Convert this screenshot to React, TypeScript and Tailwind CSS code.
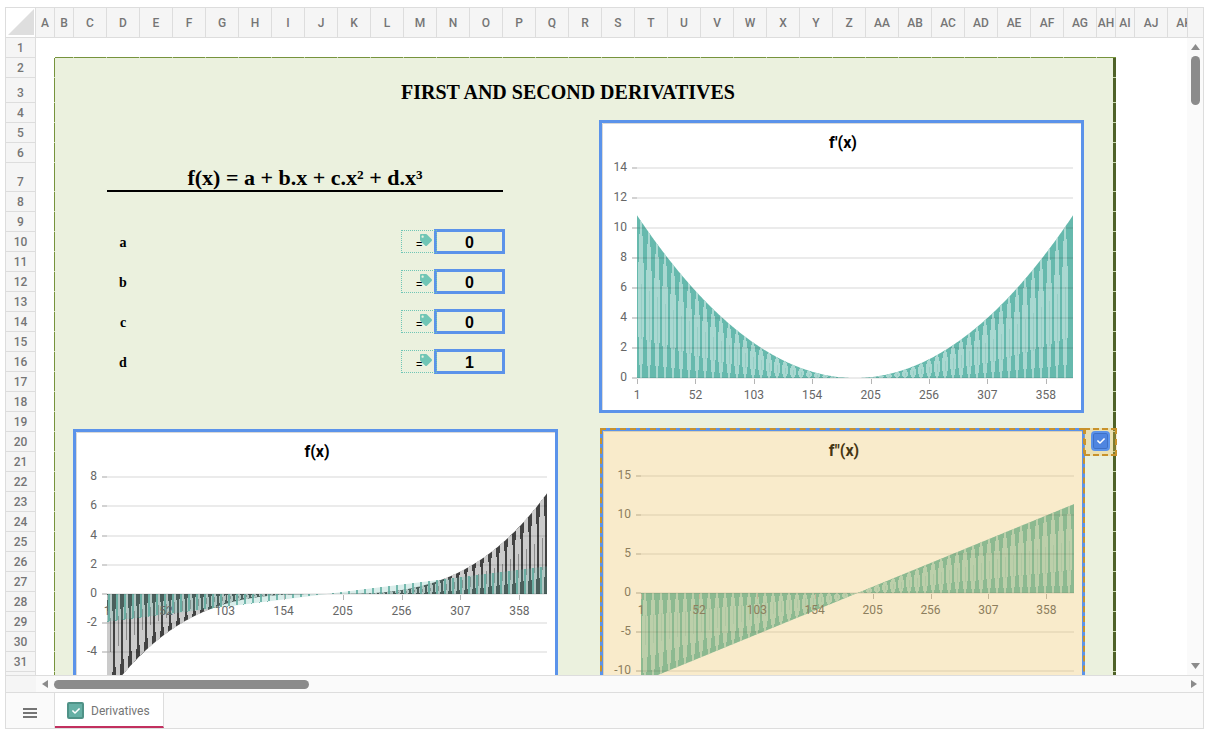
import { useState } from "react";
import { FaCheck, FaTag } from "react-icons/fa";

const letter = (i: number) =>
  i < 26 ? String.fromCharCode(65 + i) : "A" + String.fromCharCode(39 + i);

const columns = Array.from({ length: 37 }, (_, i) => ({
  name: letter(i),
  width: [0, 1, 33, 34].includes(i) ? "w-[19px]" : "w-[33px]",
}));

const rows = Array.from({ length: 35 }, (_, i) => ({
  name: i + 1,
  height: i === 2 ? "h-[25px]" : i === 6 ? "h-[29px]" : "h-5",
}));

type Series = {
  f: (t: number) => number;
  area: string;
  stripe: string;
  seam?: string;
  narrow: number;
  wide: number;
  phase: number;
};

type ChartProps = {
  title: string;
  left: number;
  zero: number;
  unit: number;
  ticks: number[];
  step: number;
  labelY: number;
  series: Series[];
};

const RIGHT = 471;

const teal: Omit<Series, "f"> = {
  area: "#66b9ad",
  stripe: "#a9d8d1",
  seam: "#96cec5",
  narrow: 2,
  wide: 6,
  phase: 4,
};

const Area = ({ s, left, zero, unit }: { s: Series; left: number; zero: number; unit: number }) => {
  const yAt = (x: number) => zero - s.f(((x - left) / (RIGHT - left)) * 2 - 1) * unit;
  const xs: number[] = [];
  for (let x = left; x <= RIGHT; x++) xs.push(x);
  const outline = `M${left} ${zero}` + xs.map((x) => `L${x} ${yAt(x)}`).join("") + `L${RIGHT} ${zero}Z`;

  // stripes swell in the middle of the area and taper at both ends
  let stripes = "";
  let seams = "";
  for (let x = left + s.phase; x < RIGHT - 1; x += 8) {
    const at = (k: number) => zero + (yAt(x) - zero) * k;
    const n = s.narrow / 2;
    const w = s.wide / 2;
    stripes +=
      `M${x - n} ${yAt(x - n)}L${x + n} ${yAt(x + n)}L${x + w} ${at(0.65)}L${x + w} ${at(0.35)}` +
      `L${x + n} ${zero}H${x - n}L${x - w} ${at(0.35)}L${x - w} ${at(0.65)}Z`;
    seams += `M${x + 0.5} ${at(0.6)}V${at(0.25)}`;
  }

  return (
    <g>
      <path d={outline} fill={s.area} />
      <path d={stripes} fill={s.stripe} shapeRendering="crispEdges" />
      {s.seam && <path d={seams} stroke={s.seam} shapeRendering="crispEdges" />}
    </g>
  );
};

const Chart = ({ title, left, zero, unit, ticks, step, labelY, series }: ChartProps) => (
  <svg viewBox="0 0 479 287" className="block h-[287px] w-[479px] font-[Roboto,sans-serif]" role="img" aria-label={title}>
    <path d="M0.5 287V0.5H479" fill="none" stroke="#d9d9d9" />
    <text x="241" y="25" textAnchor="middle" fontSize="16" fontWeight="700" fill="#000">
      {title}
    </text>
    {series.map((s, i) => (
      <Area key={i} s={s} left={left} zero={zero} unit={unit} />
    ))}
    {ticks.map((t) => {
      const y = Math.round(zero - t * unit);
      return (
        <g key={t}>
          <rect x={left} y={y - 1} width={RIGHT - left} height="2" fill="#000" fillOpacity="0.08" />
          <rect x={left - 5} y={y - 1} width="5" height="2" fill="#d2d2d2" />
          <text x={left - 10} y={y + 3} textAnchor="end" fontSize="12" fill="#666">
            {t}
          </text>
        </g>
      );
    })}
    {[1, 52, 103, 154, 205, 256, 307, 358].map((n, i) => (
      <g key={n}>
        <rect x={Math.round(left + i * step)} y={zero + 1} width="1" height="5" fill="#b5b5b5" />
        <text x={left + i * step} y={labelY} textAnchor="middle" fontSize="12" fill="#666">
          {n}
        </text>
      </g>
    ))}
  </svg>
);

const Coefficient = ({ name, initial }: { name: string; initial: string }) => {
  const [value, setValue] = useState(initial);
  return (
    <div className="flex h-10 items-start pt-2">
      <label htmlFor={name} className="w-8 pt-0.5 text-center font-['Liberation_Serif',serif] text-sm leading-6 font-bold">
        {name}
      </label>
      <div className="z-10 -mr-[3px] ml-auto mt-px flex h-[23px] w-9 items-center border border-dotted border-[#6fc6b6] pl-3.5 text-[11px]">
        <span className="pt-1 leading-4">=</span>
        <FaTag className="-ml-0.5 mb-1 size-3 shrink-0 text-[#6fc6b6]" />
      </div>
      <input
        id={name}
        value={value}
        onChange={(e) => setValue(e.target.value)}
        className="h-[25px] w-[71px] border-3 border-[#5b93ea] bg-transparent pt-0.5 text-center text-base leading-4 font-bold outline-none"
      />
    </div>
  );
};

const Sheet = () => {
  const [shown, setShown] = useState(true);
  return (
    <div className="mt-[19px] ml-[18px] w-[1062px] font-['Liberation_Sans',sans-serif] text-black">
      <div className="ml-px h-px bg-[linear-gradient(90deg,#c8d7ad_1px,#76933c_1px)] bg-[length:33px_1px] bg-[position:18px_0]" />
      <div className="flex">
        <div className="w-px bg-[#76933c]">
          {rows.slice(1).map((r) => (
            <div key={r.name} className={`${r.height} border-b border-[#d3e0bd]`} />
          ))}
        </div>
        <div className="flex-1 bg-[#ebf1de]">
          <h1 className="h-[62px] pt-5 pr-8 text-center font-['Liberation_Serif',serif] text-xl leading-7 font-bold">
            FIRST AND SECOND DERIVATIVES
          </h1>
          <div className="flex gap-[41px] pl-[18px]">
            <div className="w-[485px]">
              <div className="ml-[34px] h-[309px] w-[398px]">
                <h2 className="mr-0.5 flex h-[72px] items-end justify-center border-b-2 border-black font-['Liberation_Serif',serif] text-[22px] leading-6 font-bold">
                  f(x) = a + b.x + c.x² + d.x³
                </h2>
                <div className="pt-[29px]">
                  <Coefficient name="a" initial="0" />
                  <Coefficient name="b" initial="0" />
                  <Coefficient name="c" initial="0" />
                  <Coefficient name="d" initial="1" />
                </div>
              </div>
              <div className="border-3 border-[#5b93ea] bg-white">
                <Chart
                  title="f(x)"
                  left={31}
                  zero={162}
                  unit={14.6}
                  ticks={[8, 6, 4, 2, 0, -2, -4]}
                  step={58.9}
                  labelY={183}
                  series={[
                    { f: (t) => 6.9 * t ** 3, area: "#424242", stripe: "#cbcbcb", seam: "#8a8a8a", narrow: 4, wide: 6, phase: 3 },
                    { f: (t) => 1.9 * t, area: "rgba(102,185,173,0.25)", stripe: "rgba(82,165,152,0.75)", narrow: 3, wide: 2, phase: 2 },
                  ]}
                />
              </div>
            </div>
            <div className="w-[486px]">
              <div className="mr-px border-3 border-[#5b93ea] bg-white">
                <Chart
                  title="f'(x)"
                  left={35}
                  zero={255}
                  unit={15}
                  ticks={[14, 12, 10, 8, 6, 4, 2, 0]}
                  step={58.4}
                  labelY={276}
                  series={[{ ...teal, f: (t) => 10.85 * t * t }]}
                />
              </div>
              <div className="relative mt-[15px] ml-px border-3 border-[#5b93ea] bg-white">
                <Chart
                  title={'f"(x)'}
                  left={38}
                  zero={162}
                  unit={7.8}
                  ticks={[15, 10, 5, 0, -5, -10]}
                  step={57.9}
                  labelY={183}
                  series={[{ ...teal, f: (t) => 11.4 * t }]}
                />
                <div className="absolute inset-0 bg-[rgba(234,186,76,0.29)]" />
                <div className="absolute -inset-[3px] border-2 border-dashed border-[#c8922c]" />
                <label className="absolute -top-[3px] left-full ml-0.5 flex h-7 w-[33px] justify-center border-2 border-dashed border-[#c8922c] bg-[rgba(234,186,76,0.29)] pt-px">
                  <span className="relative flex h-5 w-[19px] items-center justify-center">
                    <input
                      type="checkbox"
                      aria-label="Include chart"
                      checked={shown}
                      onChange={() => setShown(!shown)}
                      className="absolute inset-0 appearance-none rounded-sm border-2 border-[#5b93ea] bg-[#4f85e0] ring-1 ring-[#3f71c6] ring-inset"
                    />
                    {shown && <FaCheck className="pointer-events-none relative size-2 text-white" />}
                  </span>
                </label>
              </div>
            </div>
          </div>
        </div>
        <div className="w-[3px] bg-[#4f6228]">
          {rows.slice(1).map((r) => (
            <div key={r.name} className={`${r.height} border-b border-[#c8d7ad]`} />
          ))}
        </div>
      </div>
    </div>
  );
};

const Grid = () => (
  <table className="w-[1195px] table-fixed border-separate border-spacing-0 text-xs text-[#757575]">
    <colgroup>
      <col className="w-[30px]" />
      {columns.map((c) => (
        <col key={c.name} className={c.width} />
      ))}
    </colgroup>
    <thead>
      <tr className="h-[30px]">
        <td className="border-r border-b border-[#ddd] bg-white p-0">
          <svg viewBox="0 0 29 29" className="block h-[29px] w-[29px]">
            <path d="M28 1V27H2Z" fill="#dedede" />
          </svg>
        </td>
        {columns.map((c) => (
          <th key={c.name} scope="col" className="border-r border-b border-[#ddd] bg-[#f5f5f5] p-0 text-center font-medium">
            <div className="flex justify-center">{c.name}</div>
          </th>
        ))}
      </tr>
    </thead>
    <tbody>
      {rows.map((r, i) => (
        <tr key={r.name}>
          <th scope="row" className={`${r.height} border-r border-b border-[#ddd] bg-[#f5f5f5] p-0 align-bottom leading-[17px] font-medium`}>
            {r.name}
          </th>
          {i === 0 && (
            <td rowSpan={rows.length} colSpan={columns.length} className="bg-white p-0 align-top">
              <Sheet />
            </td>
          )}
        </tr>
      ))}
    </tbody>
  </table>
);

export default function App() {
  return (
    <main className="h-screen bg-white pt-[7px] pr-[7px] pb-1.5 pl-[5px] font-[Roboto,sans-serif]">
      <div className="flex h-full flex-col border border-[#ddd] bg-[#fafafa]">
        <div className="flex min-h-0 flex-1 border-b border-[#ddd]">
          <div className="min-w-0 flex-1 overflow-hidden bg-white">
            <Grid />
          </div>
          <div className="flex w-4 flex-col items-center">
            <div className="h-[30px] w-full border-b border-l border-[#ddd] bg-[#f5f5f5]" />
            <svg viewBox="0 0 9 6" className="mt-1.5 h-1.5 w-[9px]">
              <path d="M4.5 0L9 6H0Z" fill="#8b8b8b" />
            </svg>
            <div className="mt-1.5 h-[49px] w-[9px] rounded-full bg-[#8b8b8b]" />
            <svg viewBox="0 0 9 6" className="mt-auto mb-1.5 h-1.5 w-[9px]">
              <path d="M0 0H9L4.5 6Z" fill="#8b8b8b" />
            </svg>
          </div>
        </div>

        <div className="flex h-[17px] items-center border-b border-[#ddd]">
          <div className="h-full w-[30px] bg-[#f5f5f5]" />
          <svg viewBox="0 0 6 8" className="ml-1.5 h-2 w-1.5">
            <path d="M6 0V8L0 4Z" fill="#8b8b8b" />
          </svg>
          <div className="ml-1.5 h-[9px] w-[255px] rounded-full bg-[#8b8b8b]" />
          <svg viewBox="0 0 6 8" className="mr-1.5 ml-auto h-2 w-1.5">
            <path d="M0 0V8L6 4Z" fill="#8b8b8b" />
          </svg>
        </div>

        <div className="flex h-[35px]">
          <button aria-label="All sheets" className="flex w-[49px] flex-col items-center justify-center gap-0.5 border-r border-[#ddd] pt-1">
            <span className="h-0.5 w-3.5 bg-[#757575]" />
            <span className="h-0.5 w-3.5 bg-[#757575]" />
            <span className="h-0.5 w-3.5 bg-[#757575]" />
          </button>
          <button className="flex w-[109px] items-center gap-[7px] border-r border-b-2 border-r-[#ddd] border-b-[#c2305f] bg-white pt-0.5 pl-3 text-xs text-[#757575]">
            <span className="flex size-[17px] items-center justify-center rounded-xs border-2 border-[#4f9287] bg-[#66b0a5]">
              <FaCheck className="size-2 text-white" />
            </span>
            Derivatives
          </button>
        </div>
      </div>
    </main>
  );
}
